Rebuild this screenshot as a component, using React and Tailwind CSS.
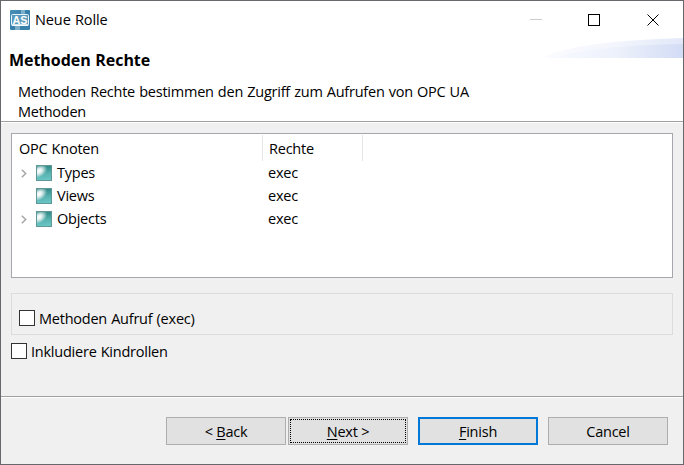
import React from "react";

function AppIcon() {
  return (
    <svg className="h-5 w-5 shrink-0" viewBox="0 0 20 20">
      <defs>
        <linearGradient id="app" x1="0" y1="0" x2="1" y2="1">
          <stop offset="0" stopColor="#4790b8" />
          <stop offset=".5" stopColor="#3580aa" />
          <stop offset="1" stopColor="#3a84ac" />
        </linearGradient>
      </defs>
      <rect width="20" height="20" rx="1" fill="url(#app)" />
      <path d="M11 0h4v4h-4zM5 16h5v4H5z" fill="#a9cddd" opacity=".6" />
      <rect x="1.500" y="4.500" width="17" height="11" rx="1" fill="#5b9abc" stroke="#eaf4f8" />
      <path d="M2 15h16" stroke="#fff" strokeWidth="1.500" />
      <text x="2.500" y="13.500" textLength="15" lengthAdjust="spacingAndGlyphs" fill="#fff" className="font-['Liberation_Sans',sans-serif] text-[10.5px] font-bold tracking-normal">AS</text>
    </svg>
  );
}

function NodeIcon() {
  return (
    <svg className="h-4 w-4 shrink-0" viewBox="0 0 16 16">
      <defs>
        <linearGradient id="node" x1=".6" y1="0" x2=".7" y2="1">
          <stop offset="0" stopColor="#28827f" />
          <stop offset=".55" stopColor="#58b3b1" />
          <stop offset="1" stopColor="#6ccac8" />
        </linearGradient>
        <radialGradient id="shine" cx="0" cy="0" r="1" gradientUnits="userSpaceOnUse" gradientTransform="translate(3 6) rotate(-32) scale(9 6)">
          <stop offset="0" stopColor="#fff" />
          <stop offset=".35" stopColor="#fff" stopOpacity=".85" />
          <stop offset="1" stopColor="#fff" stopOpacity="0" />
        </radialGradient>
      </defs>
      <rect width="16" height="16" fill="url(#node)" />
      <rect width="16" height="16" fill="url(#shine)" />
      <rect x=".5" y=".5" width="15" height="15" fill="none" stroke="#5f9896" />
    </svg>
  );
}

function Row({ label, expandable }) {
  return (
    <div className="flex h-[23px] items-center">
      <div className="flex w-6 shrink-0 pl-[9px]">
        {expandable && (
          <svg className="mt-0.5 h-[9px] w-[6px]" viewBox="0 0 6 9">
            <path d="M.8.7 4.7 4.5.8 8.3" fill="none" stroke="#a6a6a6" strokeWidth="1.5" />
          </svg>
        )}
      </div>
      <NodeIcon />
      <span className="w-[211px] pl-[5px]">{label}</span>
      <span className="pl-[5px]">exec</span>
    </div>
  );
}

function Check({ label }) {
  return (
    <label className="flex h-4 items-center">
      <span className="h-4 w-4 shrink-0 border border-[#333] bg-white" />
      <span className="pl-1 pt-0.5">{label}</span>
    </label>
  );
}

export default function App() {
  return (
    <div className="flex h-[465px] w-[684px] flex-col overflow-hidden border border-[#69676c] bg-[#f0f0f0] font-['Open_Sans','Noto_Sans',sans-serif] text-[14.5px] leading-5 tracking-[-0.23px] [word-spacing:0.6px] whitespace-nowrap text-black">
      <header className="flex h-[120px] shrink-0 flex-col bg-white">
        <div className="flex h-[37px] shrink-0 items-center justify-between pr-[24px] pl-[9px]">
          <div className="flex items-center gap-[5px]">
            <AppIcon />
            <span className="tracking-[-0.1px]">Neue Rolle</span>
          </div>
          <svg className="h-3 w-[129px]" viewBox="0 0 129 12" fill="none" shapeRendering="crispEdges">
            <path d="M0 5.5h12" stroke="#ccc" />
            <path d="M58.500 .5h11v11h-11z" stroke="#000" />
            <path d="m117.500.5 11 11m0-11-11 11" stroke="#000" shapeRendering="auto" />
          </svg>
        </div>
        <div className="flex h-[44px] shrink-0 justify-between">
          <h1 className="pt-[12px] pl-2 text-[16px] font-bold tracking-[-0.05px]">Methoden Rechte</h1>
          <svg className="h-5 w-[140px]" viewBox="0 0 140 20">
            <defs>
              <linearGradient id="wave">
                <stop offset="0" stopColor="#f8faff" />
                <stop offset=".5" stopColor="#edf1fb" />
                <stop offset="1" stopColor="#d2dcf5" />
              </linearGradient>
            </defs>
            <path d="M0 20C18 9 68 2 140 0v20z" fill="url(#wave)" opacity=".65" />
            <path d="M8 20C35 12 80 7 140 6v14z" fill="url(#wave)" />
          </svg>
        </div>
        <p className="pl-[17px]">
          Methoden Rechte bestimmen den Zugriff zum Aufrufen von OPC UA
          <br />
          Methoden
        </p>
      </header>
      <div className="h-0.5 shrink-0 border-t border-[#a0a0a0] bg-white" />
      <main className="flex h-[273px] shrink-0 flex-col px-[10px] pt-[10px]">
        <div className="h-[145px] shrink-0 border border-[#a5a7ac] bg-white">
          <div className="mt-px flex h-[26px]">
            <div className="w-[251px] border-r border-[#e5e5e5] pt-[4px] pl-[7px]">OPC Knoten</div>
            <div className="w-[100px] border-r border-[#e5e5e5] pt-[4px] pl-[6px]">Rechte</div>
          </div>
          <Row label="Types" expandable />
          <Row label="Views" />
          <Row label="Objects" expandable />
        </div>
        <div className="mt-[15px] h-[42px] shrink-0 border border-[#dcdcdc] pt-4 pl-[7px]">
          <Check label="Methoden Aufruf (exec)" />
        </div>
        <div className="mt-2">
          <Check label="Inkludiere Kindrollen" />
        </div>
      </main>
      <footer className="h-[68px] shrink-0 border-t border-[#a0a0a0]">
        <div className="h-px bg-white" />
        <div className="flex pt-[19px] pl-[165px]">
          <button className="h-7 w-[120px] border border-[#adadad] bg-[#e1e1e1] pt-px">
            &lt; <u className="underline-offset-2">B</u>ack
          </button>
          <button className="ml-[2px] h-7 w-[120px] border border-[#adadad] bg-[#e1e1e1] p-px">
            <span className="flex h-full items-center justify-center border border-dotted border-black pt-px">
              <span><u className="underline-offset-2">N</u>ext &gt;</span>
            </span>
          </button>
          <button className="ml-[10px] h-7 w-[120px] border-2 border-[#0078d7] bg-[#e1e1e1] pt-px">
            <u className="underline-offset-2">F</u>inish
          </button>
          <button className="ml-[10px] h-7 w-[120px] border border-[#adadad] bg-[#e1e1e1] pt-px">Cancel</button>
        </div>
      </footer>
    </div>
  );
}
